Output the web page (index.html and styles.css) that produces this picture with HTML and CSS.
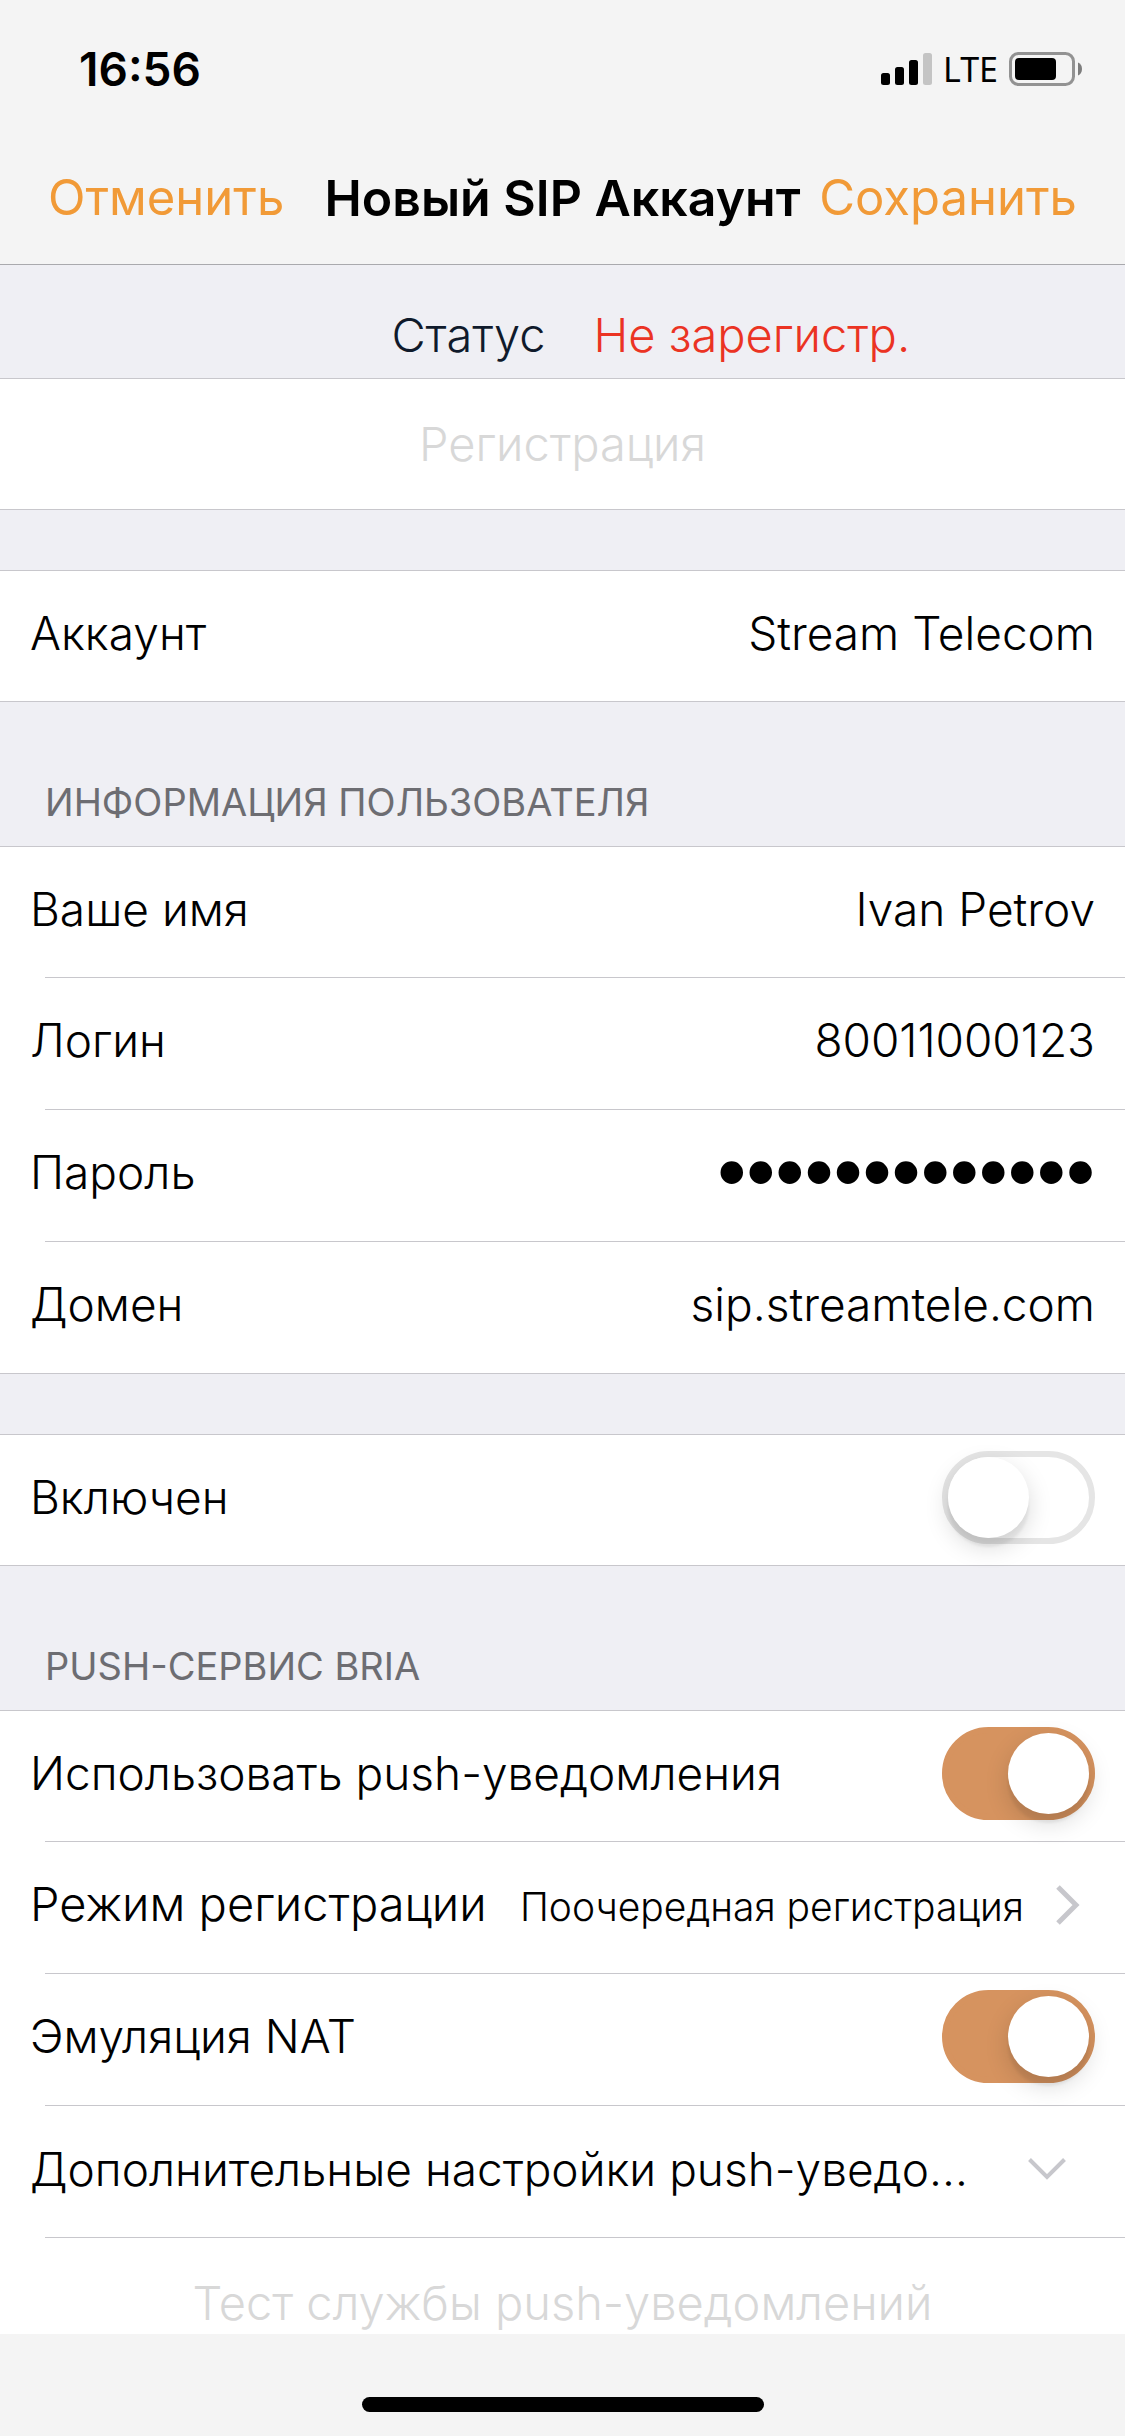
FILE: index.html
```html
<!DOCTYPE html>
<html lang="ru">
<head>
  <meta charset="UTF-8" />
  <meta name="viewport" content="width=device-width, initial-scale=1.0" />
  <title>Новый SIP Аккаунт</title>
  <link rel="stylesheet" href="styles.css">
</head>
<body>
  <div class="status-bar">
    <span class="time">16:56</span>
    <div class="indicators">
      <svg class="signal" width="51" height="32" viewBox="0 0 51 32" aria-hidden="true">
        <rect x="0" y="20" width="9" height="12" rx="2.5" />
        <rect x="14" y="14" width="9" height="18" rx="2.5" />
        <rect x="28" y="7" width="9" height="25" rx="2.5" />
        <rect x="42" y="0" width="9" height="32" rx="2.5" fill="#c4c4c4" />
      </svg>
      <span class="network">LTE</span>
      <svg class="battery" width="73" height="34" viewBox="0 0 73 34" aria-hidden="true">
        <rect x="1.5" y="1.5" width="63" height="31" rx="8" fill="none" stroke="#929292" stroke-width="3" />
        <rect x="6" y="6" width="41" height="22" rx="4" />
        <path d="M69 10.5c2.600 1 4 3.500 4 6.500s-1.400 5.500-4 6.500z" fill="#7d7d7d" />
      </svg>
    </div>
  </div>

  <header class="navbar">
    <button class="nav-btn">Отменить</button>
    <h1>Новый SIP Аккаунт</h1>
    <button class="nav-btn save">Сохранить</button>
  </header>

  <main class="content">
    <div class="reg-status">
      <span class="reg-label">Статус</span>
      <span class="reg-value">Не зарегистр.</span>
    </div>

    <section class="group">
      <button class="action" disabled>Регистрация</button>
    </section>

    <section class="group spaced">
      <div class="row">
        <label for="account">Аккаунт</label>
        <input class="field" type="text" id="account" value="Stream Telecom" />
      </div>
    </section>

    <h2>Информация пользователя</h2>
    <section class="group">
      <div class="row">
        <label for="name">Ваше имя</label>
        <input class="field" type="text" id="name" value="Ivan Petrov" />
      </div>
      <div class="row">
        <label for="login">Логин</label>
        <input class="field" type="text" id="login" value="80011000123" />
      </div>
      <div class="row">
        <label for="password">Пароль</label>
        <input class="field password" type="password" id="password" value="qwerty1234567" />
      </div>
      <div class="row">
        <label for="domain">Домен</label>
        <input class="field" type="text" id="domain" value="sip.streamtele.com" />
      </div>
    </section>

    <section class="group spaced">
      <div class="row">
        <label for="enabled">Включен</label>
        <input class="switch" type="checkbox" id="enabled" />
      </div>
    </section>

    <h2>Push-сервис Bria</h2>
    <section class="group">
      <div class="row">
        <label for="push">Использовать push-уведомления</label>
        <input class="switch" type="checkbox" id="push" checked />
      </div>
      <button class="row link">
        <span class="pair">
          <span>Режим регистрации</span>
          <span class="detail">Поочередная регистрация</span>
        </span>
        <svg class="chevron" width="24" height="40" viewBox="0 0 24 40" aria-hidden="true">
          <path d="M2 2l18 18L2 38" fill="none" stroke="#c7c7cc" stroke-width="5" />
        </svg>
      </button>
      <div class="row">
        <label for="nat">Эмуляция NAT</label>
        <input class="switch" type="checkbox" id="nat" checked />
      </div>
      <button class="row link">
        <span class="long">Дополнительные настройки push-уведо…</span>
        <svg class="chevron-down" width="38" height="22" viewBox="0 0 38 22" aria-hidden="true">
          <path d="M1.500 1.500L19 19L36.500 1.500" fill="none" stroke="#c7c7cc" stroke-width="4" />
        </svg>
      </button>
      <button class="row action" disabled>Тест службы push-уведомлений</button>
    </section>
  </main>

  <footer class="bottom-bar">
    <div class="home-indicator"></div>
  </footer>
</body>
</html>
```
FILE: styles.css
```css
* {
  box-sizing: border-box;
}
body {
  margin: 0;
  height: 100vh;
  display: flex;
  flex-direction: column;
  background: #efeff4;
  color: #000;
  font-family: Inter, "Liberation Sans", sans-serif;
  font-size: 47px;
  font-weight: 300;
  line-height: 56px;
}
button, input {
  font: inherit;
  color: inherit;
  background: none;
  border: none;
  padding: 0;
  margin: 0;
}

/* top bars */
.status-bar {
  flex: none;
  display: flex;
  justify-content: space-between;
  align-items: center;
  height: 138px;
  padding: 0 43px 0 79px;
  background: #f4f4f4;
}
.time {
  font-size: 46px;
  font-weight: 600;
}
.indicators {
  display: flex;
  align-items: center;
  gap: 11px;
}
.network {
  font-family: "Noto Sans", sans-serif;
  font-size: 34px;
  font-weight: 400;
}
.navbar {
  flex: none;
  display: grid;
  grid-template-columns: 1fr auto 1fr;
  align-items: center;
  height: 127px;
  padding: 0 48px 6px;
  background: #f4f4f4;
  border-bottom: 1px solid #a9a9ad;
}
.navbar h1 {
  margin: 0;
  font-size: 50px;
  font-weight: 600;
}
.nav-btn {
  color: #f19a37;
  font-size: 49px;
  font-weight: 400;
  text-align: left;
}
.save {
  justify-self: end;
}

/* settings list */
.content {
  flex: 1;
  min-height: 0;
  overflow: hidden;
}
.reg-status {
  display: grid;
  grid-template-columns: 1fr 1fr;
  gap: 48px;
  padding: 42px 0 15px 14px;
}
.reg-label {
  text-align: right;
  color: #0f1a2b;
}
.reg-value {
  color: #eb3323;
}
.group {
  background: #fff;
  border-top: 1px solid #c8c7cc;
  border-bottom: 1px solid #c8c7cc;
}
.spaced {
  margin-top: 60px;
}
.content h2 {
  margin: 0;
  padding: 76px 45px 20px;
  font-size: 38px;
  font-weight: 400;
  line-height: 48px;
  color: #6d6d72;
  text-transform: uppercase;
}
.row {
  display: flex;
  align-items: center;
  justify-content: space-between;
  width: 100%;
  min-height: 130px;
  padding: 0 30px 6px;
  font-size: 46px;
  text-align: left;
  white-space: nowrap;
}
.row + .row {
  min-height: 132px;
  background: linear-gradient(#c8c7cc, #c8c7cc) right top / calc(100% - 45px) 1px no-repeat;
}
.link {
  padding-bottom: 4px;
}
.field {
  flex: 1;
  min-width: 0;
  text-align: right;
  outline: none;
}
/* large size so the dots are big enough */
.password {
  font-family: "Liberation Sans", Arial, sans-serif;
  font-size: 83px;
}
.action {
  display: block;
  width: 100%;
  min-height: 130px;
  padding: 0 30px;
  font-size: 47px;
  text-align: center;
  color: #d8d8d8;
}
.pair {
  flex: 1;
  display: flex;
  align-items: baseline;
  justify-content: space-between;
  font-size: 47px;
}
.detail {
  font-size: 39px;
}
.chevron {
  margin: 0 15px 0 32px;
}
.long {
  flex: 1;
  overflow: hidden;
  text-overflow: ellipsis;
}
.chevron-down {
  margin: 0 29px 0 32px;
}

.switch {
  appearance: none;
  display: flex;
  flex: none;
  width: 153px;
  height: 93px;
  border: 6px solid #e5e5e5;
  border-radius: 47px;
  background: #fff;
}
.switch::before {
  content: "";
  width: 81px;
  height: 81px;
  border-radius: 50%;
  background: #fff;
  box-shadow: 0 9px 24px rgba(0, 0, 0, 0.15), 0 9px 3px rgba(0, 0, 0, 0.06);
}
.switch:checked {
  justify-content: flex-end;
  border-color: #d6935f;
  background: #d6935f;
}

.bottom-bar {
  flex: none;
  display: flex;
  justify-content: center;
  padding: 63px 0 24px;
  background: #f4f4f4;
}
.home-indicator {
  width: 402px;
  height: 15px;
  border-radius: 8px;
  background: #000;
}
```
